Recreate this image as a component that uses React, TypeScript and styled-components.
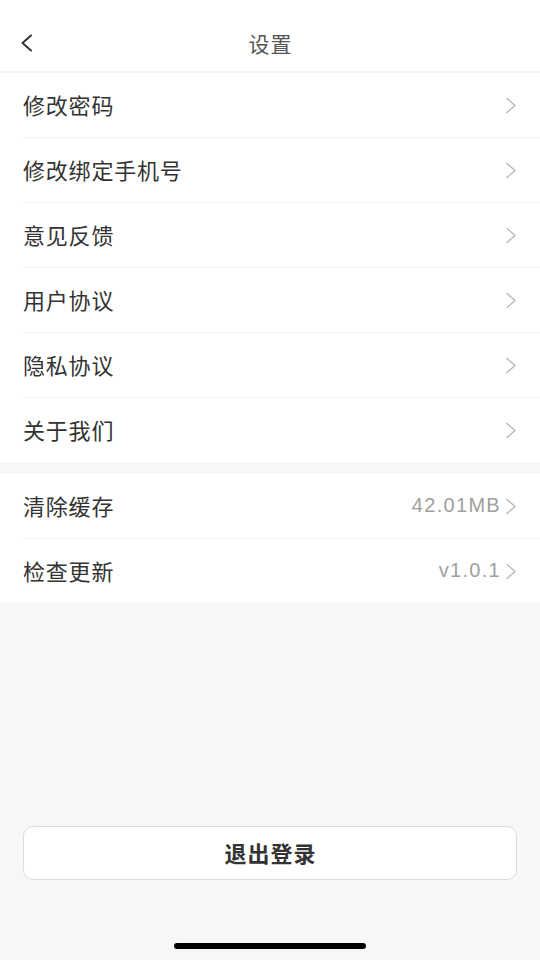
import React from 'react';
import styled, { createGlobalStyle } from 'styled-components';

const GlobalStyle = createGlobalStyle`
	html, body {
		margin: 0;
		padding: 0;
		background: #f7f7f7;
		font-family: "Noto Sans CJK SC", "Liberation Sans", sans-serif;
	}
`;

const Page = styled.div`
	width: 540px;
	height: 960px;
	display: flex;
	flex-direction: column;
	background: #f7f7f7;
`;

const Header = styled.header`
	height: 73px;
	display: grid;
	grid-template-columns: 60px 1fr 60px;
	align-items: center;
	background: #fff;
	border-bottom: 2px solid #f4f4f4;
	padding-top: 15px;
	box-sizing: border-box;
`;

const BackButton = styled.div`
	display: flex;
	align-items: center;
	padding-left: 20px;
`;

const Title = styled.h1`
	margin: 0;
	text-align: center;
	font-size: 21px;
	font-weight: 400;
	color: #555;
	letter-spacing: 1px;
	text-indent: 1px;
`;

const Group = styled.section<{ $gap?: boolean }>`
	background: #fff;
	margin-top: ${(p) => (p.$gap ? '12px' : '0')};
`;

const Row = styled.div<{ $last?: boolean }>`
	margin-left: 23px;
	padding-right: 23px;
	display: flex;
	align-items: center;
	box-sizing: border-box;
	border-bottom: ${(p) => (p.$last ? 'none' : '1px solid #f2f2f2')};
	height: ${(p) => (p.$last ? '64px' : '65px')};
`;

const Label = styled.span`
	flex: 1;
	font-size: 22px;
	color: #333;
	letter-spacing: 0.8px;
	padding-bottom: 3px;
`;

const Value = styled.span`
	font-family: "Liberation Sans", sans-serif;
	font-size: 20px;
	color: #a0a0a0;
	letter-spacing: 1.3px;
	margin-right: 4px;
	padding-bottom: 2px;
`;

const Spacer = styled.div`
	flex: 1;
`;

const Footer = styled.div`
	padding: 0 23px;
	display: flex;
	flex-direction: column;
	align-items: center;
`;

const LogoutButton = styled.button`
	width: 100%;
	height: 54px;
	background: #fff;
	border: 1px solid #dcdcdc;
	border-radius: 10px;
	font-family: "Noto Sans CJK SC", sans-serif;
	font-size: 22px;
	font-weight: 700;
	color: #333;
	letter-spacing: 1px;
	text-indent: 1px;
	padding: 0 0 3px;
`;

const HomeIndicator = styled.div`
	width: 192px;
	height: 6px;
	border-radius: 3px;
	background: #000;
	margin: 63px 0 11px;
`;

const Chevron = ({ color = '#b8b8b8' }: { color?: string }) => (
	<svg width="12" height="17" viewBox="0 0 12 17" fill="none">
		<path d="M2 1.5 L10 8.5 L2 15.5" stroke={color} strokeWidth="1.5" strokeLinecap="round" strokeLinejoin="round" />
	</svg>
);

const BackIcon = () => (
	<svg width="13" height="18" viewBox="0 0 13 18" fill="none">
		<path d="M11 1.5 L2.5 9 L11 16.5" stroke="#333" strokeWidth="2" strokeLinecap="round" strokeLinejoin="round" />
	</svg>
);

const mainItems = ['修改密码', '修改绑定手机号', '意见反馈', '用户协议', '隐私协议', '关于我们'];
const systemItems = [
	{ label: '清除缓存', value: '42.01MB' },
	{ label: '检查更新', value: 'v1.0.1' },
];

export default function App() {
	return (
		<>
			<GlobalStyle />
			<Page>
				<Header>
					<BackButton><BackIcon /></BackButton>
					<Title>设置</Title>
					<div />
				</Header>
				<Group>
					{mainItems.map((item, i) => (
						<Row key={item} $last={i === mainItems.length - 1}>
							<Label>{item}</Label>
							<Chevron />
						</Row>
					))}
				</Group>
				<Group $gap>
					{systemItems.map((item, i) => (
						<Row key={item.label} $last={i === systemItems.length - 1}>
							<Label>{item.label}</Label>
							<Value>{item.value}</Value>
							<Chevron />
						</Row>
					))}
				</Group>
				<Spacer />
				<Footer>
					<LogoutButton>退出登录</LogoutButton>
					<HomeIndicator />
				</Footer>
			</Page>
		</>
	);
}
